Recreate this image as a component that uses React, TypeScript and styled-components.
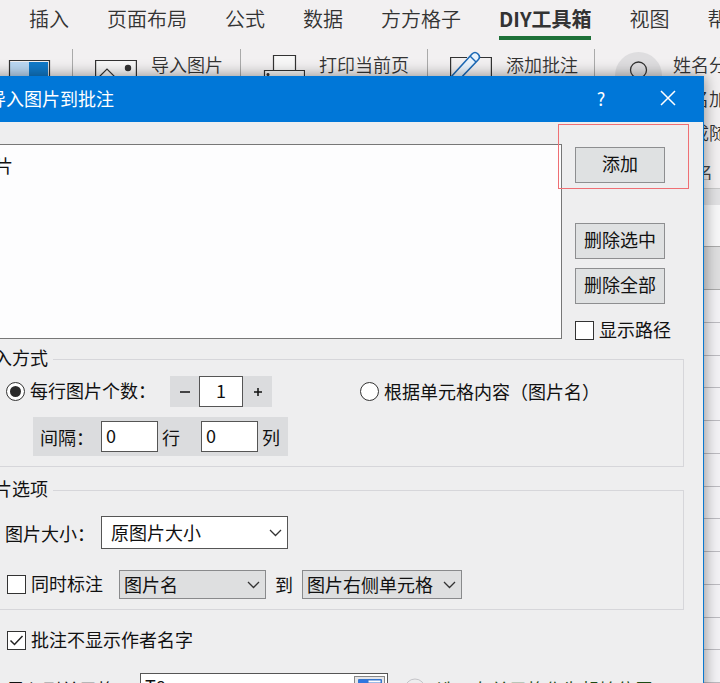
import React from "react";
import styled, { createGlobalStyle } from "styled-components";

const Global = createGlobalStyle`
  * { box-sizing: border-box; }
  html, body { margin: 0; height: 100%; overflow: hidden; }
  body, button, input, select {
    font-family: "Noto Sans CJK SC", sans-serif;
    font-size: 18px;
    line-height: 24px;
    color: #111;
  }
  #root { height: 100%; }
`;

const Page = styled.div`
  position: relative;
  height: 100vh;
  overflow: hidden;
  display: flex;
  flex-direction: column;
  background: #f2f0f1;
`;

const Tabs = styled.nav`
  display: flex;
  gap: 38px;
  height: 48px;
  padding: 5px 0 0 29px;
`;

const Tab = styled.a<{ $active?: boolean }>`
  flex: none;
  height: 35px;
  font-size: 20px;
  line-height: 28px;
  font-weight: ${(p) => (p.$active ? 700 : 350)};
  color: #333;
  text-decoration: none;
  white-space: nowrap;
  border-bottom: 4px solid ${(p) => (p.$active ? "#1e7038" : "transparent")};
`;

const Ribbon = styled.div`
  display: flex;
  height: 141px;
  border-bottom: 1px solid #c8c8c8;
`;

const Group = styled.section<{ $width?: number }>`
  flex: ${(p) => (p.$width ? `0 0 ${p.$width}px` : "1 0 180px")};
  display: flex;
  gap: 14px;
  padding-left: 22px;
  border-right: 1px solid #aaa;
  margin: 1px 0 8px;
  overflow: hidden;
  &:first-child { padding-left: 8px; }
  &:last-child { padding-left: 20px; gap: 10px; }
`;

const Commands = styled.div`
  display: flex;
  flex-direction: column;
  gap: 10px;
  padding-top: 3px;
  & > :last-child:nth-child(4) { margin: 6px 0 0 4px; }
`;

const Command = styled.button`
  padding: 0;
  border: 0;
  background: none;
  text-align: left;
  font-weight: 350;
  color: #333;
  white-space: nowrap;
`;

const Caption = styled.span`
  color: #444;
`;

const Glyph = styled.svg`
  flex: none;
  display: block;
`;

const FormulaBar = styled.div`
  height: 58px;
  border-top: 16px solid #e1e1e3;
  border-bottom: 1px solid #aaa;
  background: #f7f7f8;
`;

const ColumnHead = styled.div`
  height: 43px;
  border-bottom: 1px solid #aaa;
  background: #dededf;
`;

const Rows = styled.div`
  flex: 1;
  display: flex;
  flex-direction: column;
  background: #f3f2f5;
`;

const GridRow = styled.div`
  flex: 1;
  border-bottom: 1px solid #bcbbc0;
`;

const Dialog = styled.section`
  position: absolute;
  top: 76px;
  left: -40px;
  right: 16px;
  bottom: -60px;
  border: 1px solid #0a78cf;
  border-top: 0;
  background: #eeeeef;
  box-shadow: 0 0 14px rgba(0, 0, 0, 0.45);
`;

const TitleBar = styled.header`
  display: flex;
  align-items: center;
  height: 46px;
  padding: 0 25px 2px 27px;
  background: #0077d8;
  color: #fff;
`;

const Title = styled.h1`
  flex: 1;
  margin: 0;
  font-size: 18px;
  font-weight: 400;
`;

const TitleButton = styled.button`
  display: grid;
  place-items: center;
  width: 20px;
  height: 30px;
  margin-left: 47px;
  padding: 0;
  border: 0;
  background: none;
  color: #fff;
`;

const Body = styled.div`
  padding: 0 19px 0 7px;
`;

const Top = styled.div`
  display: flex;
  align-items: flex-start;
  margin-right: -19px;
  padding-top: 22px;
`;

const FileList = styled.ul`
  flex: 1;
  height: 195px;
  margin: 0;
  padding: 8px;
  list-style: none;
  border: 1px solid #777;
  background: #fdfdfe;
`;

const Side = styled.div`
  flex: 0 0 141px;
  display: flex;
  flex-direction: column;
  align-items: flex-start;
  gap: 9px;
  padding: 3px 0 0 13px;
`;

const Highlight = styled.div`
  position: relative;
  margin-bottom: 31px;
  &::after {
    content: "";
    position: absolute;
    inset: -23px -24px -6px -17px;
    border: 1px solid #ef6f74;
    pointer-events: none;
  }
`;

const PushButton = styled.button`
  width: 90px;
  height: 36px;
  padding: 0 0 4px;
  border: 1px solid #8d8e90;
  background: #dfe1e2;
`;

const Choice = styled.label`
  display: inline-flex;
  align-items: center;
  gap: 5px;
  white-space: nowrap;
`;

const ChoiceText = styled.span`
  padding-bottom: 2px;
`;

const MarkCell = styled.span`
  display: grid;
  width: 19px;
  height: 19px;
  & > * { grid-area: 1 / 1; }
  svg { pointer-events: none; }
`;

const Mark = styled.input`
  appearance: none;
  width: 19px;
  height: 19px;
  margin: 0;
  border: 1px solid #333;
  border-radius: ${(p) => (p.type === "radio" ? "50%" : "0")};
  background: #fff;
  & + svg { visibility: hidden; }
  &:checked + svg { visibility: visible; }
`;

const Box = styled.fieldset`
  min-width: 0;
  margin: 2px 0 9px;
  padding: 0 2px 10px;
  border: 1px solid #d6d6da;
  & + & { margin-top: 0; }
`;

const Legend = styled.legend`
  padding: 0 5px;
  padding-bottom: 5px;
`;

const Line = styled.div<{ $top: number; $indent: number }>`
  display: flex;
  align-items: center;
  padding-top: ${(p) => p.$top}px;
  padding-left: ${(p) => p.$indent}px;
`;

const Slot = styled.div<{ $width: number }>`
  flex: 0 0 ${(p) => p.$width}px;
  white-space: nowrap;
`;

const Shade = styled.div<{ $pad?: string }>`
  display: flex;
  align-items: center;
  padding: ${(p) => p.$pad ?? "0"};
  background: #dbdcde;
`;

const StepButton = styled.button`
  display: grid;
  place-items: center;
  width: 29px;
  height: 31px;
  padding: 0;
  border: 0;
  background: none;
`;

const Field = styled.input<{ $width: number; $center?: boolean }>`
  width: ${(p) => p.$width}px;
  height: 31px;
  padding: 0 4px 4px;
  border: 1px solid #555;
  background: #fff;
  text-align: ${(p) => (p.$center ? "center" : "left")};
`;

const SelectWrap = styled.span<{ $width: number }>`
  display: grid;
  align-items: center;
  width: ${(p) => p.$width}px;
  & > * { grid-area: 1 / 1; }
  svg { justify-self: end; margin-right: 6px; pointer-events: none; }
`;

const Select = styled.select<{ $filled?: boolean }>`
  appearance: none;
  width: 100%;
  height: ${(p) => (p.$filled ? 29 : 33)}px;
  padding: 0 ${(p) => (p.$filled ? 4 : 9)}px 2px;
  border: 1px solid ${(p) => (p.$filled ? "#898a8c" : "#555")};
  border-radius: 0;
  background: ${(p) => (p.$filled ? "#dedfe0" : "#fff")};
`;

const Word = styled.span`
  padding: 0 9px 2px;
`;

const CellPicker = styled.div`
  display: flex;
  width: 248px;
  height: 32px;
  padding: 2px;
  border: 1px solid #555;
  background: #fff;
`;

const CellInput = styled.input`
  flex: 1;
  min-width: 0;
  padding: 0 2px 6px;
  border: 0;
  background: none;
  line-height: 20px;
`;

const PickButton = styled.button`
  width: 31px;
  padding: 1px 3px;
  border: 1px solid #888;
  background: #e6e6e8;
`;

const Note = styled.span`
  display: inline-flex;
  align-items: center;
  gap: 11px;
  margin-left: 16px;
  color: #1d4a14;
  white-space: nowrap;
`;

function Tick(props: React.InputHTMLAttributes<HTMLInputElement> & { text: string }) {
  const { text, ...rest } = props;
  return (
    <Choice>
      <MarkCell>
        <Mark {...rest} />
        <svg width="19" height="19" viewBox="0 0 19 19" fill="none">
          {rest.type === "radio" ? (
            <circle cx="9.5" cy="9.5" r="5.5" fill="#2b2b2b" />
          ) : (
            <path d="M3.5 9.5l4 4 8-8.5" stroke="#222" strokeWidth="1.5" />
          )}
        </svg>
      </MarkCell>
      <ChoiceText>{text}</ChoiceText>
    </Choice>
  );
}

function DropDown({ label, value, width, filled }: { label: string; value: string; width: number; filled?: boolean }) {
  return (
    <SelectWrap $width={width}>
      <Select aria-label={label} $filled={filled} defaultValue={value}>
        <option>{value}</option>
      </Select>
      <svg width="13" height="8" viewBox="0 0 13 8" fill="none">
        <path d="M1 1l5.5 5.5L12 1" stroke="#333" strokeWidth="1.3" />
      </svg>
    </SelectWrap>
  );
}

const tabs = ["插入", "页面布局", "公式", "数据", "方方格子", "DIY工具箱", "视图", "帮助"];

export default function App() {
  return (
    <>
      <Global />
      <Page>
        <Tabs>
          {tabs.map((t) => (
            <Tab key={t} href="#" $active={t === "DIY工具箱"}>{t}</Tab>
          ))}
        </Tabs>
        <Ribbon>
          <Group $width={73}>
            <Glyph width="43" height="50" viewBox="0 0 43 50" fill="none">
              <path d="M2 13h19v30H2z" fill="#b9d7f2" />
              <path d="M21 13h19v30H21z" fill="#1079c8" />
              <path d="M1.500 11.500h40v32h-40z" stroke="#333" strokeWidth="1.200" />
            </Glyph>
          </Group>
          <Group $width={168}>
            <Glyph width="42" height="50" viewBox="0 0 42 50" fill="none" stroke="#333" strokeWidth="1.200">
              <path d="M.6 11.500h40.800v32H.6z" fill="#f7f7f7" />
              <path d="M1 31l11-11 15 15 5-5 9 9" />
              <circle cx="33" cy="19" r="2.600" fill="#333" />
            </Glyph>
            <Commands><Command>导入图片</Command></Commands>
          </Group>
          <Group $width={187}>
            <Glyph width="42" height="50" viewBox="0 0 42 50" fill="none" stroke="#333" strokeWidth="1.200">
              <path d="M10.500 21V6.500h22V21" fill="#f7f7f7" />
              <path d="M1.500 21.500h40v20h-40z" fill="#f7f7f7" />
              <circle cx="5" cy="25.500" r="1" fill="#333" />
            </Glyph>
            <Commands><Command>打印当前页</Command></Commands>
          </Group>
          <Group $width={167}>
            <Glyph width="42" height="50" viewBox="0 0 42 50" fill="none" strokeWidth="1.200">
              <path d="M17 8.500H.6v34h40.800v-34H30" stroke="#333" />
              <path d="M1 28L22 5q3-3 6 0t0 6L7 33l-8 2z" fill="#e9f3fc" stroke="#1c69b5" strokeWidth="1.600" />
              <path d="M20 7l6 6" stroke="#1c69b5" strokeWidth="1.400" />
            </Glyph>
            <Commands><Command>添加批注</Command></Commands>
          </Group>
          <Group>
            <Glyph width="48" height="60" viewBox="0 0 48 60" fill="none">
              <circle cx="23.500" cy="26.500" r="23.500" fill="#dedddf" />
              <circle cx="23.500" cy="21" r="8" stroke="#333" strokeWidth="1.300" />
              <path d="M10 42c2-16 25-16 27 0" stroke="#333" strokeWidth="1.300" />
            </Glyph>
            <Commands>
              <Command>姓名分列</Command>
              <Command>姓名加空格</Command>
              <Command>生成随机名</Command>
              <Caption>姓名</Caption>
            </Commands>
          </Group>
        </Ribbon>
        <FormulaBar />
        <ColumnHead />
        <Rows>
          {Array.from({ length: 12 }, (_, i) => <GridRow key={i} />)}
        </Rows>

        <Dialog role="dialog" aria-labelledby="dialog-title">
          <TitleBar>
            <Title id="dialog-title">导入图片到批注</Title>
            <TitleButton aria-label="帮助">?</TitleButton>
            <TitleButton aria-label="关闭">
              <svg width="16" height="16" viewBox="0 0 16 16" stroke="#fff" strokeWidth="1.500">
                <path d="M1 1l14 14M15 1L1 15" />
              </svg>
            </TitleButton>
          </TitleBar>
          <Body>
            <Top>
              <FileList><li>图片</li></FileList>
              <Side>
                <Highlight><PushButton>添加</PushButton></Highlight>
                <PushButton>删除选中</PushButton>
                <PushButton>删除全部</PushButton>
                <Line $top={4} $indent={0}><Tick type="checkbox" text="显示路径" /></Line>
              </Side>
            </Top>
            <Box>
              <Legend>导入方式</Legend>
              <Line $top={2} $indent={35}>
                <Slot $width={164}><Tick type="radio" name="mode" defaultChecked text="每行图片个数：" /></Slot>
                <Shade>
                  <StepButton aria-label="减少">
                    <svg width="10" height="10" stroke="#111" strokeWidth="1.500"><path d="M0 5h10" /></svg>
                  </StepButton>
                  <Field aria-label="每行图片个数" $width={44} $center defaultValue="1" />
                  <StepButton aria-label="增加">
                    <svg width="10" height="10" stroke="#111" strokeWidth="1.500"><path d="M1 5h8M5 1v8" /></svg>
                  </StepButton>
                </Shade>
                <Slot $width={88} />
                <Tick type="radio" name="mode" text="根据单元格内容（图片名）" />
              </Line>
              <Line $top={10} $indent={62}>
                <Shade $pad="4px 7px">
                  <Slot $width={61}>间隔：</Slot>
                  <Field aria-label="行间隔" $width={57} defaultValue="0" />
                  <Slot $width={43}>&nbsp;行</Slot>
                  <Field aria-label="列间隔" $width={57} defaultValue="0" />
                  <Slot $width={23}>&nbsp;列</Slot>
                </Shade>
              </Line>
            </Box>
            <Box>
              <Legend>图片选项</Legend>
              <Line $top={11} $indent={34}>
                <Slot $width={96}>图片大小：</Slot>
                <DropDown label="图片大小" value="原图片大小" width={187} />
              </Line>
              <Line $top={21} $indent={36}>
                <Slot $width={112}><Tick type="checkbox" text="同时标注" /></Slot>
                <DropDown label="标注内容" value="图片名" width={147} filled />
                <Word>到</Word>
                <DropDown label="标注位置" value="图片右侧单元格" width={160} filled />
              </Line>
            </Box>
            <Line $top={8} $indent={39}>
              <Tick type="checkbox" defaultChecked text="批注不显示作者名字" />
            </Line>
            <Line $top={20} $indent={39}>
              <Slot $width={133}>导入到单元格：</Slot>
              <CellPicker>
                <CellInput aria-label="导入到单元格" defaultValue="T8" />
                <PickButton aria-label="选择单元格">
                  <Glyph width="24" height="20" viewBox="0 0 24 20" fill="none">
                    <path d="M.5.500h23v19H.5z" fill="#fff" stroke="#3977cc" />
                    <path d="M1 1h9v6H1z" fill="#2f76e0" />
                    <path d="M10 1h13v3H10zM17 4v15" stroke="#3977cc" />
                  </Glyph>
                </PickButton>
              </CellPicker>
              <Note>
                <svg width="22" height="22" viewBox="0 0 22 22" fill="none">
                  <circle cx="11" cy="11" r="10" stroke="#c4c4c8" />
                  <path d="M11 6v2M11 10v7" stroke="#55a055" strokeWidth="2" />
                </svg>
                选一左单元格作为起始位置
              </Note>
            </Line>
          </Body>
        </Dialog>
      </Page>
    </>
  );
}
